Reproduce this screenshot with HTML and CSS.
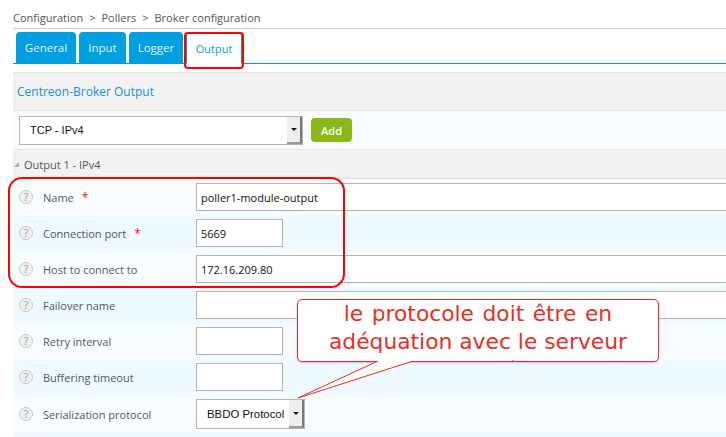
FILE: index.html
```html
<!DOCTYPE html>
<html lang="fr">
<head>
<meta charset="utf-8">
<title>Broker configuration</title>
<link rel="stylesheet" href="styles.css">
</head>
<body>
<div class="page">
  <div class="crumbs"><span>Configuration</span><span>&gt;</span><span>Pollers</span><span>&gt;</span><span>Broker configuration</span></div>
  <div class="tabs">
    <div class="tab tab-general">General</div>
    <div class="tab tab-input">Input</div>
    <div class="tab tab-logger">Logger</div>
    <div class="tab active">Output</div>
  </div>
  <div class="title">Centreon-Broker Output</div>
  <div class="addrow">
    <div class="select wide"><span class="seltext">TCP - IPv4</span><span class="selbtn"><i class="arrow"></i></span></div>
    <div class="add">Add</div>
  </div>
  <div class="section"><i class="tri"></i>Output 1 - IPv4</div>
  <div class="row odd"><i class="help">?</i><span class="label">Name<b class="req">*</b></span><div class="input long">poller1-module-output</div></div>
  <div class="row even"><i class="help">?</i><span class="label">Connection port<b class="req">*</b></span><div class="input short">5669</div></div>
  <div class="row odd"><i class="help">?</i><span class="label">Host to connect to</span><div class="input long">172.16.209.80</div></div>
  <div class="row even"><i class="help">?</i><span class="label">Failover name</span><div class="input long"></div></div>
  <div class="row odd"><i class="help">?</i><span class="label">Retry interval</span><div class="input short"></div></div>
  <div class="row even"><i class="help">?</i><span class="label">Buffering timeout</span><div class="input short"></div></div>
  <div class="row odd last"><i class="help">?</i><span class="label">Serialization protocol</span><div class="select small"><span class="seltext">BBDO Protocol</span><span class="selbtn"><i class="arrow"></i></span></div></div>
  <div class="row even"></div>
</div>
<div class="ring ring-tab"></div>
<div class="ring ring-rows"></div>
<div class="callout"><span class="line-one">le protocole doit être en</span><br>adéquation avec le serveur</div>
<svg class="tail" width="220" height="42" viewBox="0 0 220 42"><path d="M1 38 L81 1 L116 1 Z" fill="#fff"/><path d="M1 38 L81 1 M1 38 L116 1" fill="none" stroke="#ee2a1e" stroke-width="1"/><path d="M216 0 v2" stroke="#ee2a1e"/></svg>
</body>
</html>
```
FILE: styles.css
```css
html, body { margin: 0; padding: 0; background: #fff; overflow: hidden; }
body { width: 726px; height: 437px; position: relative; font-family: "Open Sans", sans-serif; color: #4a5560; font-size: 11px; }
.page { padding-left: 13px; height: 437px; overflow: hidden; }
.crumbs { height: 22px; padding-top: 6px; border-bottom: 1px solid #ccc; display: flex; gap: 6px; align-items: center; color: #555; font-size: 11px; }
.tabs { display: flex; gap: 3px; padding: 3px 0 0 3px; height: 31px; border-bottom: 1px solid #009bdf; margin-bottom: 8px; }
.tab { background: #009fe0; color: #e6f5fc; border-radius: 4px 4px 0 0; display: flex; align-items: center; justify-content: center; font-size: 11.5px; height: 31px; }
.tab-general { width: 60px; }
.tab-input { width: 47px; }
.tab-logger { width: 54px; }
.tab.active { width: 56px; background: #fff; color: #0a9ae0; border: 1px solid #009bdf; border-bottom: 1px solid #fff; box-sizing: border-box; height: 32px; font-size: 11px; }
.title { height: 39px; background: #f2f2f2; border-top: 1px solid #e3e3e3; border-bottom: 1px solid #e3e3e3; box-sizing: border-box; display: flex; align-items: center; padding-left: 4px; color: #1a8fd1; font-size: 12px; }
.addrow { height: 39px; background: #f7fdff; border-bottom: 1px solid #e6e6e6; box-sizing: border-box; display: flex; align-items: center; padding-left: 6px; gap: 8px; }
.select { display: flex; background: #fff; border: 1px solid #b4b4b4; box-sizing: border-box; color: #111; font-size: 11px; flex-shrink: 0; }
.wide { width: 284px; height: 29px; }
.small { width: 109px; height: 30px; font-size: 11.4px; }
.seltext { flex: 1; display: flex; align-items: center; padding-left: 10px; white-space: nowrap; font-family: "Liberation Sans", sans-serif; }
.selbtn { width: 13px; background: #eee; border-right: 2px solid #777; border-bottom: 2px solid #999; display: flex; align-items: center; justify-content: center; }
.arrow { width: 0; height: 0; border-left: 3px solid transparent; border-right: 3px solid transparent; border-top: 3px solid #111; }
.add { width: 41px; height: 24px; background: #88b917; color: #fff; border-radius: 4px; display: flex; align-items: center; justify-content: center; font-weight: 600; font-size: 11px; }
.section { height: 29px; background: #f2f2f2; border-bottom: 1px solid #e3e3e3; box-sizing: border-box; display: flex; align-items: center; color: #555; font-size: 11px; }
.tri { width: 0; height: 0; border-left: 5px solid transparent; border-bottom: 5px solid #aaa; margin-right: 5px; margin-left: 1px; }
.row { height: 36px; display: flex; align-items: center; box-sizing: border-box; }
.odd { background: #f7fdff; }
.even { background: #eefaff; }
.last { height: 38px; }
.help { width: 12px; height: 12px; border-radius: 50%; border: 1px solid #c8c8c8; background: #f0f0f0; color: #9a9a9a; display: flex; align-items: center; justify-content: center; font-style: normal; font-size: 10.5px; margin-left: 6px; flex-shrink: 0; }
.label { width: 153px; margin-left: 10px; color: #4d5966; font-size: 11px; flex-shrink: 0; }
.req { color: #e8141c; font-weight: 400; margin-left: 8px; font-size: 12px; }
.input { height: 28px; background: #fff; border: 1px solid #b4b4b4; box-sizing: border-box; display: flex; align-items: center; padding-left: 4px; color: #111; font-size: 11px; flex-shrink: 0; }
.long { width: 540px; }
.short { width: 87px; }
.ring { position: absolute; border: 2px solid #f00; box-sizing: border-box; }
.ring-tab { left: 184px; top: 32px; width: 60px; height: 37px; border-radius: 4px; }
.ring-rows { left: 8px; top: 177px; width: 337px; height: 111px; border-radius: 14px; }
.callout { position: absolute; left: 297px; top: 299px; width: 362px; height: 63px; box-sizing: border-box; background: #fff; border: 1px solid #ee2a1e; border-radius: 5px; color: #e8301f; font-family: "DejaVu Sans", sans-serif; font-size: 21.8px; line-height: 28px; text-align: center; box-shadow: 0 1px 2px rgba(0,0,0,.2); }
.line-one { word-spacing: 1.5px; }
.tail { position: absolute; left: 297px; top: 360px; }
```
